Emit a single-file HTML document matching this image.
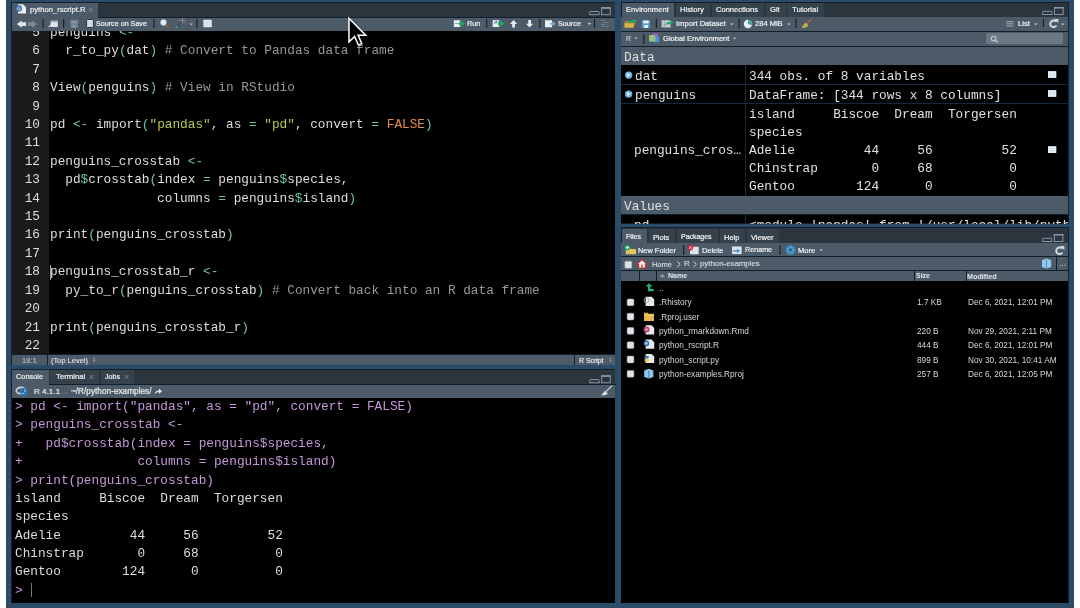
<!DOCTYPE html>
<html><head><meta charset="utf-8">
<style>
*{margin:0;padding:0;box-sizing:border-box}
html,body{width:1080px;height:608px;overflow:hidden;background:#fff}
body{position:relative;font-family:"Liberation Sans",sans-serif;color:#e2e6ea}
.a{position:absolute;white-space:pre;will-change:transform}
.op{color:#70c0b1}.st{color:#b9ca4a}.cn{color:#e78c45}.cm{color:#969896}.pr{color:#c397d8}
</style></head><body>
<div class="a" style="left:6px;top:598px;width:7px;height:10px;background:#3a3d40;"></div>
<div class="a" style="left:1067px;top:598px;width:7px;height:10px;background:#3a3d40;"></div>
<div class="a" style="left:6px;top:0px;width:1068px;height:608px;background:#2c4b66;border-radius:0 0 6px 6px"></div>
<div class="a" style="left:11px;top:2px;width:604px;height:363px;background:#101f2b;"></div>
<div class="a" style="left:12px;top:3px;width:603px;height:14px;background:#2a353e;"></div>
<div class="a" style="left:12px;top:3px;width:86px;height:14.5px;background:#4c5b67;"></div>
<div class="a" style="left:12px;top:17.5px;width:603px;height:13px;background:#4c5b67;"></div>
<div class="a" style="left:12px;top:31px;width:603px;height:323px;background:#000;"></div>
<div class="a" style="left:12px;top:31px;width:37px;height:323px;background:#1a1a1a;"></div>
<div class="a" style="left:12px;top:355px;width:603px;height:9.8px;background:#4c5b67;"></div>
<div class="a" style="left:47px;top:355px;width:1px;height:9.8px;background:#101f2b;"></div>
<div class="a" style="left:574px;top:355px;width:1px;height:9.8px;background:#101f2b;"></div>
<div class="a" style="left:29.57px;top:4.58px;font-size:7.64px;line-height:9.55px;color:#eef0f2;-webkit-text-stroke:0.2px #eef0f2;">python_rscript.R</div>
<div class="a" style="left:96.38px;top:20.33px;font-size:7.17px;line-height:8.96px;color:#f0f3f5;-webkit-text-stroke:0.2px #f0f3f5;">Source on Save</div>
<div class="a" style="left:466.98px;top:18.80px;font-size:7.21px;line-height:9.01px;color:#f0f3f5;-webkit-text-stroke:0.2px #f0f3f5;">Run</div>
<div class="a" style="left:557.98px;top:18.76px;font-size:7.24px;line-height:9.05px;color:#f0f3f5;-webkit-text-stroke:0.2px #f0f3f5;">Source</div>
<div class="a" style="left:22.27px;top:355.98px;font-size:7.63px;line-height:9.54px;color:#aab4bc;-webkit-text-stroke:0.2px #aab4bc;">18:1</div>
<div class="a" style="left:51.48px;top:356.14px;font-size:7.47px;line-height:9.34px;color:#d8dde2;-webkit-text-stroke:0.2px #d8dde2;">(Top Level)</div>
<div class="a" style="left:578.69px;top:356.71px;font-size:6.89px;line-height:8.61px;color:#e8ebee;-webkit-text-stroke:0.2px #e8ebee;">R Script</div>
<div class="a" style="left:12px;top:31px;width:604px;height:323px;overflow:hidden"><div class="a" style="left:0;top:-7px;width:28px;text-align:right;font-family:'Liberation Mono';font-size:12.75px;line-height:18.4px;color:#dedede">5
6
7
8
9
10
11
12
13
14
15
16
17
18
19
20
21
22</div><div class="a" style="left:37.7px;top:-7px;font-family:'Liberation Mono';font-size:12.75px;line-height:18.4px;color:#dedede">penguins <span class="op">&lt;-</span>
  r_to_py<span class="op">(</span>dat<span class="op">)</span> <span class="cm"># Convert to Pandas data frame</span>

View<span class="op">(</span>penguins<span class="op">)</span> <span class="cm"># View in RStudio</span>

pd <span class="op">&lt;-</span> import<span class="op">(</span><span class="st">"pandas"</span>, as <span class="op">=</span> <span class="st">"pd"</span>, convert <span class="op">=</span> <span class="cn">FALSE</span><span class="op">)</span>

penguins_crosstab <span class="op">&lt;-</span>
  pd<span class="op">$</span>crosstab<span class="op">(</span>index <span class="op">=</span> penguins<span class="op">$</span>species,
              columns <span class="op">=</span> penguins<span class="op">$</span>island<span class="op">)</span>

print<span class="op">(</span>penguins_crosstab<span class="op">)</span>

penguins_crosstab_r <span class="op">&lt;-</span>
  py_to_r<span class="op">(</span>penguins_crosstab<span class="op">)</span> <span class="cm"># Convert back into an R data frame</span>

print<span class="op">(</span>penguins_crosstab_r<span class="op">)</span>
</div></div>
<div class="a" style="left:50px;top:264.5px;width:1px;height:14.5px;background:#aaaaaa;"></div>
<div class="a" style="left:11px;top:369px;width:604px;height:234px;background:#101f2b;"></div>
<div class="a" style="left:12px;top:370px;width:603px;height:14.5px;background:#2a353e;"></div>
<div class="a" style="left:12px;top:370px;width:37px;height:14.5px;background:#4c5b67;"></div>
<div class="a" style="left:50.3px;top:370px;width:48.6px;height:14px;background:#36424b;"></div>
<div class="a" style="left:100.7px;top:370px;width:33px;height:14px;background:#36424b;"></div>
<div class="a" style="left:12px;top:384.5px;width:603px;height:13.2px;background:#4c5b67;"></div>
<div class="a" style="left:49px;top:384px;width:566.5px;height:0.8px;background:#101f2b;"></div>
<div class="a" style="left:12px;top:398px;width:603px;height:205px;background:#000;"></div>
<div class="a" style="left:16.48px;top:371.94px;font-size:7.37px;line-height:9.21px;color:#eef0f2;-webkit-text-stroke:0.2px #eef0f2;">Console</div>
<div class="a" style="left:55.67px;top:372.35px;font-size:7.77px;line-height:9.71px;color:#f0f3f5;-webkit-text-stroke:0.2px #f0f3f5;">Terminal</div>
<div class="a" style="left:104.89px;top:373.03px;font-size:7.07px;line-height:8.84px;color:#f0f3f5;-webkit-text-stroke:0.2px #f0f3f5;">Jobs</div>
<div class="a" style="left:34.16px;top:386.91px;font-size:8.12px;line-height:10.15px;color:#e8ebee;-webkit-text-stroke:0.2px #e8ebee;">R 4.1.1</div>
<div class="a" style="left:65.28px;top:387.51px;font-size:7.5px;line-height:9.38px;color:#8c98a2;-webkit-text-stroke:0.2px #8c98a2;">·</div>
<div class="a" style="left:71.25px;top:386.78px;font-size:8.25px;line-height:10.31px;color:#e8ebee;-webkit-text-stroke:0.2px #e8ebee;">~/R/python-examples/</div>
<div class="a" style="left:12px;top:398px;width:604px;height:205px;overflow:hidden"><div class="a" style="left:2.5px;top:0.4px;font-family:'Liberation Mono';font-size:12.75px;line-height:18.38px;color:#dedede"><span class="pr">&gt; pd &lt;- import("pandas", as = "pd", convert = FALSE)
&gt; penguins_crosstab &lt;-
+   pd$crosstab(index = penguins$species,
+               columns = penguins$island)
&gt; print(penguins_crosstab)</span>
island     Biscoe  Dream  Torgersen
species
Adelie         44     56         52
Chinstrap       0     68          0
Gentoo        124      0          0
<span class="pr">&gt; </span></div></div>
<div class="a" style="left:31px;top:583px;width:1px;height:14px;background:#777;"></div>
<div class="a" style="left:620.8px;top:2px;width:447.79999999999995px;height:221.6px;background:#101f2b;"></div>
<div class="a" style="left:621px;top:3px;width:447px;height:14px;background:#2a353e;"></div>
<div class="a" style="left:621px;top:3px;width:53px;height:14.2px;background:#4c5b67;"></div>
<div class="a" style="left:621px;top:3px;width:0.9px;height:14px;background:#101f2b;"></div>
<div class="a" style="left:675.9px;top:3px;width:33.80000000000007px;height:13.7px;background:#36424b;"></div>
<div class="a" style="left:712px;top:3px;width:51.89999999999998px;height:13.7px;background:#36424b;"></div>
<div class="a" style="left:766px;top:3px;width:19.5px;height:13.7px;background:#36424b;"></div>
<div class="a" style="left:787.3px;top:3px;width:36.60000000000002px;height:13.7px;background:#36424b;"></div>
<div class="a" style="left:621px;top:17.2px;width:447px;height:13.8px;background:#4c5b67;"></div>
<div class="a" style="left:621px;top:32px;width:447px;height:14px;background:#4c5b67;"></div>
<div class="a" style="left:985.7px;top:33px;width:76.5px;height:11px;background:#6b7984;border-radius:2px"></div>
<div class="a" style="left:621px;top:47px;width:447px;height:18px;background:#4c5b67;"></div>
<div class="a" style="left:621px;top:65px;width:447px;height:131px;background:#000;"></div>
<div class="a" style="left:621px;top:84px;width:447px;height:1px;background:#15293a;"></div>
<div class="a" style="left:621px;top:103px;width:447px;height:1px;background:#15293a;"></div>
<div class="a" style="left:745px;top:65px;width:1px;height:131px;background:#15293a;"></div>
<div class="a" style="left:621px;top:196px;width:447px;height:18.3px;background:#4c5b67;"></div>
<div class="a" style="left:621px;top:214.5px;width:447px;height:8.2px;background:#000;"></div>
<div class="a" style="left:745px;top:214.5px;width:1px;height:8.5px;background:#15293a;"></div>
<div class="a" style="left:626.27px;top:5.38px;font-size:7.63px;line-height:9.54px;color:#eef0f2;-webkit-text-stroke:0.2px #eef0f2;">Environment</div>
<div class="a" style="left:680.27px;top:5.32px;font-size:7.7px;line-height:9.62px;color:#f0f3f5;-webkit-text-stroke:0.2px #f0f3f5;">History</div>
<div class="a" style="left:716.07px;top:5.46px;font-size:7.55px;line-height:9.44px;color:#f0f3f5;-webkit-text-stroke:0.2px #f0f3f5;">Connections</div>
<div class="a" style="left:769.67px;top:5.42px;font-size:7.6px;line-height:9.5px;color:#f0f3f5;-webkit-text-stroke:0.2px #f0f3f5;">Git</div>
<div class="a" style="left:791.96px;top:5.06px;font-size:7.97px;line-height:9.96px;color:#f0f3f5;-webkit-text-stroke:0.2px #f0f3f5;">Tutorial</div>
<div class="a" style="left:675.67px;top:19.02px;font-size:7.6px;line-height:9.5px;color:#f0f3f5;-webkit-text-stroke:0.2px #f0f3f5;">Import Dataset</div>
<div class="a" style="left:755.47px;top:19.07px;font-size:7.54px;line-height:9.43px;color:#f0f3f5;-webkit-text-stroke:0.2px #f0f3f5;">284 MiB</div>
<div class="a" style="left:1017.57px;top:19.33px;font-size:7.69px;line-height:9.61px;color:#f0f3f5;-webkit-text-stroke:0.2px #f0f3f5;">List</div>
<div class="a" style="left:625.69px;top:34.70px;font-size:7px;line-height:8.75px;color:#c4ccd2;-webkit-text-stroke:0.2px #c4ccd2;">R</div>
<div class="a" style="left:662.67px;top:34.15px;font-size:7.57px;line-height:9.46px;color:#f0f3f5;-webkit-text-stroke:0.2px #f0f3f5;">Global Environment</div>
<div class="a" style="left:623.90px;top:48.61px;font-family:'Liberation Mono';font-size:12.75px;line-height:18.4px;color:#e0e0e0;">Data</div>
<div class="a" style="left:635.20px;top:67.61px;font-family:'Liberation Mono';font-size:12.75px;line-height:18.4px;color:#e0e0e0;">dat</div>
<div class="a" style="left:635.20px;top:86.51px;font-family:'Liberation Mono';font-size:12.75px;line-height:18.4px;color:#e0e0e0;">penguins</div>
<div class="a" style="left:748.80px;top:67.61px;font-family:'Liberation Mono';font-size:12.75px;line-height:18.4px;color:#e0e0e0;">344 obs. of 8 variables</div>
<div class="a" style="left:748.80px;top:86.51px;font-family:'Liberation Mono';font-size:12.75px;line-height:18.4px;color:#e0e0e0;">DataFrame: [344 rows x 8 columns]</div>
<div class="a" style="left:748.60px;top:105.81px;font-family:'Liberation Mono';font-size:12.75px;line-height:18.4px;color:#e0e0e0;">island     Biscoe  Dream  Torgersen</div>
<div class="a" style="left:748.60px;top:123.89px;font-family:'Liberation Mono';font-size:12.75px;line-height:18.4px;color:#e0e0e0;">species</div>
<div class="a" style="left:748.60px;top:141.97px;font-family:'Liberation Mono';font-size:12.75px;line-height:18.4px;color:#e0e0e0;">Adelie         44     56         52</div>
<div class="a" style="left:748.60px;top:160.05px;font-family:'Liberation Mono';font-size:12.75px;line-height:18.4px;color:#e0e0e0;">Chinstrap       0     68          0</div>
<div class="a" style="left:748.60px;top:178.13px;font-family:'Liberation Mono';font-size:12.75px;line-height:18.4px;color:#e0e0e0;">Gentoo        124      0          0</div>
<div class="a" style="left:634.30px;top:142.31px;font-family:'Liberation Mono';font-size:12.75px;line-height:18.4px;color:#e0e0e0;">penguins_cros…</div>
<div class="a" style="left:624.00px;top:198.01px;font-family:'Liberation Mono';font-size:12.75px;line-height:18.4px;color:#e0e0e0;">Values</div>
<div class="a" style="left:621px;top:214.5px;width:447px;height:8.5px;overflow:hidden">
<div class="a" style="left:13.40px;top:2.11px;font-family:'Liberation Mono';font-size:12.75px;line-height:18.4px;color:#e0e0e0;">pd</div>
<div class="a" style="left:127.80px;top:2.11px;font-family:'Liberation Mono';font-size:12.75px;line-height:18.4px;color:#e0e0e0;">&lt;module 'pandas' from '/usr/local/lib/python3.9/site-packages'&gt;</div>
</div>
<div class="a" style="left:620.8px;top:227px;width:447.79999999999995px;height:376px;background:#101f2b;"></div>
<div class="a" style="left:621px;top:228px;width:447px;height:15px;background:#2a353e;"></div>
<div class="a" style="left:621px;top:228.5px;width:26.1px;height:14.7px;background:#4c5b67;"></div>
<div class="a" style="left:621px;top:228.5px;width:0.9px;height:14.5px;background:#101f2b;"></div>
<div class="a" style="left:648.8px;top:228.5px;width:26.200000000000045px;height:14.2px;background:#36424b;"></div>
<div class="a" style="left:676.7px;top:228.5px;width:41.39999999999998px;height:14.2px;background:#36424b;"></div>
<div class="a" style="left:720px;top:228.5px;width:24.700000000000045px;height:14.2px;background:#36424b;"></div>
<div class="a" style="left:747.1px;top:228.5px;width:31.699999999999932px;height:14.2px;background:#36424b;"></div>
<div class="a" style="left:621px;top:243.2px;width:447px;height:13.4px;background:#4c5b67;"></div>
<div class="a" style="left:621px;top:257.2px;width:447px;height:12.8px;background:#4c5b67;"></div>
<div class="a" style="left:621px;top:270.8px;width:447px;height:9.9px;background:#4c5b67;"></div>
<div class="a" style="left:639.2px;top:270.8px;width:1px;height:9.9px;background:#101f2b;"></div>
<div class="a" style="left:655.5px;top:270.8px;width:1px;height:9.9px;background:#101f2b;"></div>
<div class="a" style="left:914.3px;top:270.8px;width:1px;height:9.9px;background:#101f2b;"></div>
<div class="a" style="left:965.6px;top:270.8px;width:1px;height:9.9px;background:#101f2b;"></div>
<div class="a" style="left:1056.4px;top:257.2px;width:1px;height:12.8px;background:#101f2b;"></div>
<div class="a" style="left:621px;top:281px;width:447px;height:322px;background:#000;"></div>
<div class="a" style="left:626.49px;top:233.03px;font-size:7.07px;line-height:8.84px;color:#eef0f2;-webkit-text-stroke:0.2px #eef0f2;">Files</div>
<div class="a" style="left:653.28px;top:232.81px;font-size:7.3px;line-height:9.12px;color:#f0f3f5;-webkit-text-stroke:0.2px #f0f3f5;">Plots</div>
<div class="a" style="left:681.49px;top:233.15px;font-size:6.95px;line-height:8.69px;color:#f0f3f5;-webkit-text-stroke:0.2px #f0f3f5;">Packages</div>
<div class="a" style="left:724.18px;top:232.65px;font-size:7.46px;line-height:9.32px;color:#f0f3f5;-webkit-text-stroke:0.2px #f0f3f5;">Help</div>
<div class="a" style="left:750.88px;top:232.66px;font-size:7.45px;line-height:9.31px;color:#f0f3f5;-webkit-text-stroke:0.2px #f0f3f5;">Viewer</div>
<div class="a" style="left:638.48px;top:245.79px;font-size:7.42px;line-height:9.28px;color:#f0f3f5;-webkit-text-stroke:0.2px #f0f3f5;">New Folder</div>
<div class="a" style="left:702.48px;top:245.79px;font-size:7.42px;line-height:9.28px;color:#f0f3f5;-webkit-text-stroke:0.2px #f0f3f5;">Delete</div>
<div class="a" style="left:745.38px;top:246.03px;font-size:7.18px;line-height:8.97px;color:#f0f3f5;-webkit-text-stroke:0.2px #f0f3f5;">Rename</div>
<div class="a" style="left:798.27px;top:245.65px;font-size:7.57px;line-height:9.46px;color:#f0f3f5;-webkit-text-stroke:0.2px #f0f3f5;">More</div>
<div class="a" style="left:652.38px;top:259.67px;font-size:7.44px;line-height:9.3px;color:#cfd6dc;-webkit-text-stroke:0.2px #cfd6dc;">Home</div>
<div class="a" style="left:683.76px;top:259.13px;font-size:8px;line-height:10.0px;color:#cfd6dc;-webkit-text-stroke:0.2px #cfd6dc;">R</div>
<div class="a" style="left:699.76px;top:259.27px;font-size:7.85px;line-height:9.81px;color:#cfd6dc;-webkit-text-stroke:0.2px #cfd6dc;">python-examples</div>
<div class="a" style="left:668.29px;top:271.84px;font-size:7.06px;line-height:8.82px;color:#e8ebee;font-weight:bold;">Name</div>
<div class="a" style="left:916.29px;top:271.95px;font-size:6.95px;line-height:8.69px;color:#e8ebee;font-weight:bold;">Size</div>
<div class="a" style="left:967.48px;top:271.70px;font-size:7.21px;line-height:9.01px;color:#e8ebee;font-weight:bold;">Modified</div>
<div class="a" style="left:658.65px;top:283.88px;font-size:8.25px;line-height:10.31px;color:#d4d8dc;">..</div>
<div class="a" style="left:658.65px;top:298.24px;font-size:8.25px;line-height:10.31px;color:#d4d8dc;">.Rhistory</div>
<div class="a" style="left:917.35px;top:298.24px;font-size:8.25px;line-height:10.31px;color:#d4d8dc;">1.7 KB</div>
<div class="a" style="left:968.15px;top:298.24px;font-size:8.25px;line-height:10.31px;color:#d4d8dc;">Dec 6, 2021, 12:01 PM</div>
<div class="a" style="left:658.65px;top:312.60px;font-size:8.25px;line-height:10.31px;color:#d4d8dc;">.Rproj.user</div>
<div class="a" style="left:658.65px;top:326.96px;font-size:8.25px;line-height:10.31px;color:#d4d8dc;">python_rmarkdown.Rmd</div>
<div class="a" style="left:917.35px;top:326.96px;font-size:8.25px;line-height:10.31px;color:#d4d8dc;">220 B</div>
<div class="a" style="left:968.15px;top:326.96px;font-size:8.25px;line-height:10.31px;color:#d4d8dc;">Nov 29, 2021, 2:11 PM</div>
<div class="a" style="left:658.65px;top:341.32px;font-size:8.25px;line-height:10.31px;color:#d4d8dc;">python_rscript.R</div>
<div class="a" style="left:917.35px;top:341.32px;font-size:8.25px;line-height:10.31px;color:#d4d8dc;">444 B</div>
<div class="a" style="left:968.15px;top:341.32px;font-size:8.25px;line-height:10.31px;color:#d4d8dc;">Dec 6, 2021, 12:01 PM</div>
<div class="a" style="left:658.65px;top:355.68px;font-size:8.25px;line-height:10.31px;color:#d4d8dc;">python_script.py</div>
<div class="a" style="left:917.35px;top:355.68px;font-size:8.25px;line-height:10.31px;color:#d4d8dc;">899 B</div>
<div class="a" style="left:968.15px;top:355.68px;font-size:8.25px;line-height:10.31px;color:#d4d8dc;">Nov 30, 2021, 10:41 AM</div>
<div class="a" style="left:658.65px;top:370.04px;font-size:8.25px;line-height:10.31px;color:#d4d8dc;">python-examples.Rproj</div>
<div class="a" style="left:917.35px;top:370.04px;font-size:8.25px;line-height:10.31px;color:#d4d8dc;">257 B</div>
<div class="a" style="left:968.15px;top:370.04px;font-size:8.25px;line-height:10.31px;color:#d4d8dc;">Dec 6, 2021, 12:05 PM</div>
<svg class="a" style="left:0;top:0" width="1080" height="608"><path d="M18 4.2h5l3 3v6.199999999999999h-8z" fill="#eceff1"/><circle cx="19" cy="8.4" r="2.4" fill="#c9d6e2" stroke="#4677aa" stroke-width="1.4"/><path d="M18.6 7.2v2.6M18.6 7.3h1q0.8 0.1 0.2 1.1l-1 0.2" stroke="#3b6ea6" stroke-width="0.7" fill="none"/><path d="M88.8 7.6l4 4M92.8 7.6l-4 4" stroke="#7d8a94" stroke-width="1"/><path d="M16.9 24.1l4.6-3.6v1.8h4.6v3.6h-4.6v1.8z" fill="#dfe4e8"/><path d="M36.8 24.1l-4.6-3.6v1.8h-4.2v3.6h4.2v1.8z" fill="#7e8a93"/><rect x="42.5" y="19" width="1" height="9" fill="#0d1821"/><rect x="50.6" y="20.8" width="7.2" height="6.2" rx="0.8" fill="#dfe3e7"/><rect x="50.6" y="20.8" width="7.2" height="1.4" fill="#9fb4c6"/><path d="M48.8 27l2.6-2.6" stroke="#dfe3e7" stroke-width="1.1"/><rect x="63.2" y="19" width="1" height="9" fill="#0d1821"/><rect x="70.2" y="20" width="7.8" height="7.8" fill="#6d7f8e" stroke="#56708a" stroke-width="0.6"/><rect x="71.3" y="20.8" width="5.6" height="2.6" fill="#8d8fa6"/><rect x="71.8" y="24.8" width="4.6" height="3" fill="#7f93a2"/><rect x="86.6" y="19.5" width="6.8" height="8" rx="1" fill="#d5dbe0" stroke="#1e2d3a" stroke-width="0.9"/><rect x="153.4" y="19" width="1" height="9" fill="#0d1821"/><circle cx="163.5" cy="22.4" r="2.9" fill="#e4ecf2" stroke="#c0d0dc" stroke-width="0.6"/><path d="M165.8 24.8l3 3" stroke="#b8542a" stroke-width="1.6"/><path d="M176.5 27.3L182.5 21" stroke="#1d2a34" stroke-width="1.6"/><path d="M176.5 27.3L182.5 21" stroke="#8aa0ae" stroke-width="0.6"/><circle cx="176.6" cy="27" r="0.9" fill="#3ab8a0"/><path d="M182.5 17.8v1.4M182.5 22.2v1.4M179.6 20.7h1.4M184.2 20.7h1.4M180.4 18.6l1 1M183.6 21.8l1 1M184.6 18.6l-1 1" stroke="#d8845a" stroke-width="0.8"/><circle cx="182.5" cy="20.7" r="0.9" fill="#5ac0e0"/><path d="M189.8 23.6h3.2l-1.6 1.7600000000000002z" fill="#c9d0d6"/><rect x="196.4" y="19" width="1" height="9" fill="#0d1821"/><rect x="203" y="19.8" width="8.8" height="7.4" rx="0.6" fill="#e4e8ec"/><path d="M204.6 22h6M204.6 23.8h6M204.6 25.6h6" stroke="#c8d0d6" stroke-width="0.5"/><rect x="203" y="19.8" width="1.1" height="7.4" fill="#b0b8bf"/><path d="M453.8 20.2h6.300000000000001l0.1 0.1v6.7h-6.4z" fill="#eceff1"/><rect x="454.6" y="23" width="4.8" height="1" fill="#7fb2d8"/><path d="M459 22.3h2.6v-2l3.6 3.3-3.6 3.3v-2h-2.6z" fill="#1fa860"/><path d="M492.7 20.2h6.300000000000001l0.1 0.1v6.7h-6.4z" fill="#eceff1"/><path d="M494 23.5q0-2 2-2v-1l1.6 1.6-1.6 1.6v-1q-1 0-1 1z" fill="#3c7cc4"/><path d="M498 22.3h2.6v-2l3.6 3.3-3.6 3.3v-2h-2.6z" fill="#1fa860"/><rect x="486.3" y="19" width="1" height="9" fill="#0d1821"/><path d="M513.6 20.1l3.6 3.8h-2.2v3.7h-2.8v-3.7h-2.2z" fill="#e6eaed"/><path d="M529.6 27.5l3.6-3.8h-2.2v-3.7h-2.8v3.7h-2.2z" fill="#e6eaed"/><rect x="539.3" y="19" width="1" height="9" fill="#0d1821"/><path d="M545 20.2h6.9l0.1 0.1v6.9h-7z" fill="#eceff1"/><path d="M550.5 22.8h2v-1.8l3.3 2.8-3.3 2.8v-1.8h-2z" fill="#6fa8d6"/><path d="M587.7 23.1h3.5l-1.75 1.9250000000000003z" fill="#c9d0d6"/><rect x="594.1" y="19" width="1" height="9" fill="#0d1821"/><path d="M601 20.5h4M603 22.6h5.3M601 24.5h4M601 26.2h7.3" stroke="#76838d" stroke-width="0.8"/><path d="M589.6 14.7v-2.2q0-1 1-1h7.6q1 0 1 1v2.2z" fill="none" stroke="#8995a0" stroke-width="1"/><rect x="601.6" y="7.7" width="8.6" height="7" fill="none" stroke="#8995a0" stroke-width="1"/><rect x="601.1" y="7.2" width="9.6" height="1.6" fill="#8995a0"/><path d="M93 359.3l1.3-1.7 1.3 1.7zM93 360.3l1.3 1.7 1.3-1.7z" fill="#9aa5ae"/><path d="M609.3 359.3l1.3-1.7 1.3 1.7zM609.3 360.3l1.3 1.7 1.3-1.7z" fill="#9aa5ae"/><path d="M349 18.3v23.6l5.6-5.4 3.8 8.6 3.4-1.5-3.7-8.3h7.6z" fill="#000" stroke="#fff" stroke-width="1.5" stroke-linejoin="miter"/><path d="M89.5 375l4 4M93.5 375l-4 4M124.5 375l4 4M128.5 375l-4 4" stroke="#7d8a94" stroke-width="0.9"/><ellipse cx="20.9" cy="390.6" rx="4.6" ry="3.1" fill="none" stroke="#c8ced4" stroke-width="1.8"/><text x="19.9" y="395.7" font-family="Liberation Sans" font-weight="bold" font-size="10.5" fill="#1d7fe0">R</text><path d="M154.6 394q0.6-3.6 4.4-3.6v-2l3 2.8-3 2.8v-2q-2.6 0-4.4 2z" fill="#e3e7ea"/><path d="M589.7 382.8v-2.2q0-1 1-1h7.6q1 0 1 1v2.2z" fill="none" stroke="#8995a0" stroke-width="1"/><rect x="601.7" y="375.8" width="8.6" height="7" fill="none" stroke="#8995a0" stroke-width="1"/><rect x="601.2" y="375.3" width="9.6" height="1.6" fill="#8995a0"/><path d="M612 385.7L606 391.7" stroke="#d8dde2" stroke-width="1.1"/><path d="M605 390.7l3 3l-3 1.5l-4 0.2z" fill="#d8dde2"/><path d="M624.2 23h10.5l-1.4 4.8h-8.6z" fill="#d9b24a"/><path d="M625 21.2h4l1 1h3.8v1.3h-8.8z" fill="#b88c2c"/><path d="M627 22.5q3-3 7-2.4v-1.4l3 2.4-3 2.4v-1.4q-3-0.2-5 1z" fill="#1aa868"/><rect x="642" y="20.2" width="8" height="7.8" fill="#5a9ad4"/><rect x="643.4" y="20.6" width="5.2" height="2.8" fill="#e8f0f8"/><rect x="644.2" y="25" width="3.8" height="3" fill="#e8f0f8"/><rect x="655.8" y="18.5" width="1" height="9.5" fill="#0d1821"/><rect x="661.6" y="20.4" width="9" height="7" fill="#d5dbe0"/><path d="M661.6 22.6h9M661.6 24.4h9M661.6 26.1h9M664.5 20.4v7" stroke="#8a969f" stroke-width="0.6"/><path d="M665 25q2.5-3.5 5.5-3.4v-1.5l3 2.5-3 2.5v-1.4q-2.7 0-5.5 1.3z" fill="#1aa868"/><path d="M730 23.6h3.2l-1.6 1.7600000000000002z" fill="#c9d0d6"/><rect x="738.6" y="18.5" width="1" height="9.5" fill="#0d1821"/><circle cx="748" cy="24" r="4.2" fill="#e8ecef"/><path d="M748 24v-4.2a4.2 4.2 0 0 1 4 5.4z" fill="#3fa89a"/><path d="M787.2 23.6h3.2l-1.6 1.7600000000000002z" fill="#c9d0d6"/><rect x="795.6" y="18.5" width="1" height="9.5" fill="#0d1821"/><path d="M811.4 19L806.5 24" stroke="#c0602a" stroke-width="1.3"/><path d="M805.5 22.6l3.2 3.2-4.6 2.4-2.4-1.2z" fill="#c8b04a"/><path d="M803.5 24.5l3 3" stroke="#88a03a" stroke-width="0.8"/><path d="M1006.2 21.6h7.4M1006.2 23.8h7.4M1006.2 26h7.4" stroke="#a7b1b9" stroke-width="0.9"/><path d="M1034 23.4h3.2l-1.6 1.7600000000000002z" fill="#c9d0d6"/><rect x="1042.9" y="19" width="1" height="8" fill="#0d1821"/><path d="M1056 21.6A3.3 3.3 0 1 0 1056.4 25.4" fill="none" stroke="#d5dadf" stroke-width="2"/><path d="M1054 19h4.3v4.3z" fill="#d5dadf"/><path d="M1061 23.4h3.4l-1.7 1.87z" fill="#c9d0d6"/><path d="M1042.5 14.5v-2.2q0-1 1-1h7.6q1 0 1 1v2.2z" fill="none" stroke="#8995a0" stroke-width="1"/><rect x="1054.5" y="7.5" width="8.6" height="7" fill="none" stroke="#8995a0" stroke-width="1"/><rect x="1054" y="7" width="9.6" height="1.6" fill="#8995a0"/><path d="M634.6 37.6h3.2l-1.6 1.7600000000000002z" fill="#b9c2c9"/><rect x="643.3" y="34" width="1" height="10" fill="#0d1821"/><rect x="652" y="33" width="6.3" height="6.3" rx="1" fill="#9b59b6"/><rect x="653.5" y="36.3" width="5.8" height="6.3" rx="1" fill="#4a90d9"/><rect x="649" y="35" width="6.4" height="6.4" rx="1.2" fill="#9ac07a"/><path d="M733 37.8h3.2l-1.6 1.7600000000000002z" fill="#c9d0d6"/><circle cx="993.6" cy="38.5" r="2.3" fill="none" stroke="#c3cbd1" stroke-width="1.1"/><path d="M995.2 40.2l2.4 2.3" stroke="#c3cbd1" stroke-width="1.3"/><circle cx="628.6" cy="75.1" r="3.7" fill="#6fb2e4"/><path d="M627.3 72.89999999999999l3.2 2.2-3.2 2.2z" fill="#fff"/><circle cx="628.6" cy="94.1" r="3.7" fill="#6fb2e4"/><path d="M627.3 91.89999999999999l3.2 2.2-3.2 2.2z" fill="#fff"/><rect x="1048" y="71.1" width="8.3" height="6.8" fill="#eef3f8"/><path d="M1048 73.39999999999999h8.3M1048 75.6h8.3M1050.8 71.1v6.8M1053.5 71.1v6.8" stroke="#b9cfe0" stroke-width="0.5"/><rect x="1048" y="90.1" width="8.3" height="6.8" fill="#eef3f8"/><path d="M1048 92.39999999999999h8.3M1048 94.6h8.3M1050.8 90.1v6.8M1053.5 90.1v6.8" stroke="#b9cfe0" stroke-width="0.5"/><rect x="1048" y="146.2" width="8.3" height="6.8" fill="#eef3f8"/><path d="M1048 148.5h8.3M1048 150.7h8.3M1050.8 146.2v6.8M1053.5 146.2v6.8" stroke="#b9cfe0" stroke-width="0.5"/><path d="M1042.3 241.5v-2.2q0-1 1-1h7.6q1 0 1 1v2.2z" fill="none" stroke="#8995a0" stroke-width="1"/><rect x="1054.3" y="234.5" width="8.6" height="7" fill="none" stroke="#8995a0" stroke-width="1"/><rect x="1053.8" y="234" width="9.6" height="1.6" fill="#8995a0"/><path d="M625.8 248h4.2l1 1h5v5.2h-10.2z" fill="#e4c45a"/><circle cx="627.4" cy="247.6" r="2.8" fill="#1aa868"/><path d="M627.4 246v3.2M625.8 247.6h3.2" stroke="#fff" stroke-width="0.9"/><rect x="683.2" y="245" width="1" height="10" fill="#0d1821"/><path d="M690 246.8h8.6l0.1 0.1v7.300000000000001h-8.7z" fill="#dfe3e7"/><circle cx="690.4" cy="247.6" r="2.8" fill="#c8202a"/><path d="M689.2 246.4l2.4 2.4M691.6 246.4l-2.4 2.4" stroke="#fff" stroke-width="0.9"/><rect x="732" y="246.5" width="9.6" height="7.6" fill="#dfe3e7"/><path d="M732.8 250.2h4.5v-1.6l2.6 2.3-2.6 2.3v-1.6h-4.5z" fill="#2e8ad8"/><rect x="779.5" y="245" width="1" height="10" fill="#0d1821"/><circle cx="790.5" cy="250" r="3.8" fill="none" stroke="#3aa0e0" stroke-width="2.2" stroke-dasharray="1.6 0.9"/><circle cx="790.5" cy="250" r="2.6" fill="none" stroke="#3aa0e0" stroke-width="1.6"/><path d="M819.6 249.6h3.2l-1.6 1.7600000000000002z" fill="#c9d0d6"/><path d="M1062 248.6A3.3 3.3 0 1 0 1062.4 252.4" fill="none" stroke="#d5dadf" stroke-width="2"/><path d="M1060 246h4.3v4.3z" fill="#d5dadf"/><rect x="624.8" y="261.2" width="7" height="7" rx="1.3" fill="#dfe3e7" stroke="#9aa4ac" stroke-width="0.5"/><path d="M642 259.6l-5 4.6h1.6v3.8h6.8v-3.8h1.6z" fill="#f0f0f0" stroke="#cc2a2a" stroke-width="1.1"/><rect x="641.1" y="264.6" width="1.8" height="3.2" fill="#c07030"/><path d="M677.2 261.5l3 2.8-3 2.8M693.4 261.5l3 2.8-3 2.8" fill="none" stroke="#cfd6dc" stroke-width="1"/><path d="M1042 260.2l4.6-1.6 4.6 1.6v6.8l-4.6 1.6-4.6-1.6z" fill="#8fc8ec"/><path d="M1046.6 260v8.4" stroke="#3a88c0" stroke-width="0.8"/><circle cx="1060.3" cy="265.3" r="0.55" fill="#c8d0d6"/><circle cx="1062.5" cy="265.3" r="0.55" fill="#c8d0d6"/><circle cx="1064.7" cy="265.3" r="0.55" fill="#c8d0d6"/><path d="M659.5 277.2l2.9-3.4 2.9 3.4z" fill="#8d99a2"/><path d="M645.5 286.5l3.5-3.3 3.5 3.3h-2.3v2.6h3.5v2.2h-5.8v-4.8z" fill="#1fb27a"/><rect x="627.1" y="298.90000000000003" width="6.8" height="6.8" rx="1.3" fill="#dfe3e7" stroke="#9aa4ac" stroke-width="0.5"/><path d="M645.6 296.70000000000005h6.0l2.6 2.6v6.6h-8.6z" fill="#e6e9ec"/><circle cx="646.5" cy="300.3" r="2.5" fill="none" stroke="#9aa3aa" stroke-width="0.8"/><rect x="627.1" y="313.20000000000005" width="6.8" height="6.8" rx="1.3" fill="#dfe3e7" stroke="#9aa4ac" stroke-width="0.5"/><path d="M644 312.8h3.8l1 1h5.2v7.2h-10z" fill="#e0b84c"/><rect x="644" y="314.8" width="10" height="1" fill="#f2d27a"/><rect x="627.1" y="327.50000000000006" width="6.8" height="6.8" rx="1.3" fill="#dfe3e7" stroke="#9aa4ac" stroke-width="0.5"/><path d="M645.6 325.30000000000007h6.0l2.6 2.6v6.6h-8.6z" fill="#e6e9ec"/><circle cx="646.6" cy="329.50000000000006" r="3" fill="#c0407a"/><circle cx="646.6" cy="329.50000000000006" r="1.2" fill="#e8a0c0"/><rect x="627.1" y="341.8" width="6.8" height="6.8" rx="1.3" fill="#dfe3e7" stroke="#9aa4ac" stroke-width="0.5"/><path d="M645.6 339.6h6.0l2.6 2.6v6.6h-8.6z" fill="#e6e9ec"/><circle cx="646.4" cy="343.4" r="2.8" fill="#2f6fb0"/><circle cx="646.4" cy="343.4" r="1.2" fill="#d0e2f4"/><rect x="627.1" y="356.1" width="6.8" height="6.8" rx="1.3" fill="#dfe3e7" stroke="#9aa4ac" stroke-width="0.5"/><path d="M645.6 353.90000000000003h6.0l2.6 2.6v6.6h-8.6z" fill="#e6e9ec"/><path d="M644.2 358.7a2.4 2.4 0 0 1 2.4-2.8h2v2.4z" fill="#3b73a8"/><path d="M649 358.90000000000003a2.4 2.4 0 0 1-2.4 2.8h-2v-2.4z" fill="#f2cc3c"/><rect x="627.1" y="370.40000000000003" width="6.8" height="6.8" rx="1.3" fill="#dfe3e7" stroke="#9aa4ac" stroke-width="0.5"/><path d="M644.2 370.40000000000003l4.6-1.6 4.6 1.6v6.6l-4.6 1.6-4.6-1.6z" fill="#8fc6e8"/><path d="M648.8 370.6v8" stroke="#3a7cb0" stroke-width="0.9"/></svg>
</body></html>
